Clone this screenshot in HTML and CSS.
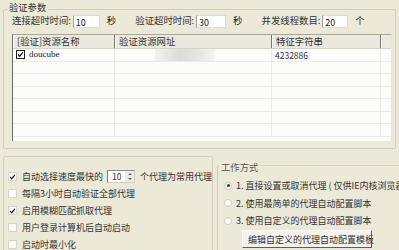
FILE: index.html
```html
<!DOCTYPE html>
<html>
<head>
<meta charset="utf-8">
<link rel="stylesheet" href="styles.css">
</head>
<body>
<div class="page">
  <div class="group top-group">
    <span class="legend">验证参数</span>
    <div class="param-row">
      <span class="lbl">连接超时时间:</span>
      <span class="input w27">10</span>
      <span class="unit">秒</span>
      <span class="lbl">验证超时时间:</span>
      <span class="input w30">30</span>
      <span class="unit">秒</span>
      <span class="lbl">并发线程数目:</span>
      <span class="input w26">20</span>
      <span class="unit">个</span>
    </div>
    <div class="list">
      <div class="list-head">
        <div class="hc c1">[验证]资源名称</div>
        <div class="hc c2">验证资源网址</div>
        <div class="hc c3">特征字符串</div>
        <div class="hc c4"></div>
      </div>
      <div class="list-body">
        <div class="lrow">
          <div class="cell c1"><span class="lcheck"><svg width="9" height="9" viewBox="0 0 9 9"><path d="M1.5 4.5 L3.5 6.8 L7.5 1.8" fill="none" stroke="#111" stroke-width="1.6"/></svg></span><span class="mono">doucube</span></div>
          <div class="cell c2"><span class="blur"></span></div>
          <div class="cell c3">4232886</div>
          <div class="cell c4"></div>
        </div>
        <div class="lrow"><div class="cell c1"></div><div class="cell c2"></div><div class="cell c3"></div><div class="cell c4"></div></div>
        <div class="lrow"><div class="cell c1"></div><div class="cell c2"></div><div class="cell c3"></div><div class="cell c4"></div></div>
        <div class="lrow"><div class="cell c1"></div><div class="cell c2"></div><div class="cell c3"></div><div class="cell c4"></div></div>
        <div class="lrow"><div class="cell c1"></div><div class="cell c2"></div><div class="cell c3"></div><div class="cell c4"></div></div>
        <div class="lrow"><div class="cell c1"></div><div class="cell c2"></div><div class="cell c3"></div><div class="cell c4"></div></div>
        <div class="lrow"><div class="cell c1"></div><div class="cell c2"></div><div class="cell c3"></div><div class="cell c4"></div></div>
      </div>
    </div>
  </div>
  <div class="bottom">
    <div class="group left-group">
      <div class="opt"><span class="cb"><svg width="9" height="9" viewBox="0 0 9 9"><path d="M1.5 4.5 L3.5 6.8 L7.5 1.8" fill="none" stroke="#111" stroke-width="1.5"/></svg></span><span>自动选择速度最快的</span><span class="spin"><span class="spin-val">10</span><span class="spin-btn"><span class="up"></span><span class="dn"></span></span></span><span>个代理为常用代理</span></div>
      <div class="opt"><span class="cb"></span><span>每隔3小时自动验证全部代理</span></div>
      <div class="opt"><span class="cb"><svg width="9" height="9" viewBox="0 0 9 9"><path d="M1.5 4.5 L3.5 6.8 L7.5 1.8" fill="none" stroke="#111" stroke-width="1.5"/></svg></span><span>启用模糊匹配抓取代理</span></div>
      <div class="opt"><span class="cb"></span><span>用户登录计算机后自动启动</span></div>
      <div class="opt"><span class="cb"></span><span>启动时最小化</span></div>
    </div>
    <div class="group right-group">
      <span class="legend legend-faded">工作方式</span>
      <div class="ropt"><span class="radio on"></span><span>1. 直接设置或取消代理 ( 仅供IE内核浏览器</span></div>
      <div class="ropt"><span class="radio"></span><span>2. 使用最简单的代理自动配置脚本</span></div>
      <div class="ropt"><span class="radio"></span><span>3. 使用自定义的代理自动配置脚本</span></div>
      <div class="btn-row"><span class="btn">编辑自定义的代理自动配置模板</span></div>
    </div>
  </div>
</div>
</body>
</html>
```
FILE: styles.css
```css
html, body {
  margin: 0;
  padding: 0;
}
body {
  width: 399px;
  height: 250px;
  overflow: hidden;
  background: #ece9d8;
  font-family: "Noto Sans CJK SC", "Noto Sans", sans-serif;
  font-size: 9px;
  color: #222;
  line-height: 1;
}
.page {
  padding: 9px 3px 0 3px;
  display: flex;
  flex-direction: column;
}
.group {
  position: relative;
  border: 1px solid #d3d0c2;
  border-radius: 2px;
}
.legend {
  position: absolute;
  top: -8px;
  left: 3px;
  padding: 0 2px;
  background: #ece9d8;
  font-size: 9.3px;
  color: #333;
  line-height: 10px;
  white-space: nowrap;
}
.legend-faded {
  color: #555;
  top: -4px;
  left: 1px;
}
.top-group {
  height: 140px;
  box-sizing: border-box;
  padding: 4px 3px 0 8px;
}
.param-row {
  display: flex;
  align-items: center;
  height: 14px;
  white-space: nowrap;
}
.param-row > span {
  flex-shrink: 0;
}
.lbl {
  font-size: 9.4px;
  color: #333;
  margin-right: 2px;
}
.input {
  background: #fff;
  height: 13px;
  box-sizing: border-box;
  border: 1px solid #d8dcdf;
  border-left-color: #9aa3ab;
  padding: 2px 0 0 2px;
  font-size: 9px;
  color: #222;
}
.w27 { width: 27px; }
.w30 { width: 30px; }
.w26 { width: 26px; }
.unit {
  margin: 0 19px 0 7px;
  font-size: 9.4px;
}
.list {
  margin-top: 6px;
  width: 380px;
  height: 107px;
  background: #fcfcfa;
  border-left: 1px solid #6d6c66;
  border-top: 1px solid #a9a79c;
  border-right: 1px solid #e8e6dc;
  box-sizing: border-box;
  display: flex;
  flex-direction: column;
}
.list-head {
  display: flex;
  height: 13px;
  background: #ebe9de;
  border-bottom: 1px solid #d6d3c7;
}
.hc {
  box-sizing: border-box;
  padding: 2px 0 0 3px;
  font-size: 9.4px;
  color: #333;
  border-right: 1px solid #777670;
  border-left: 1px solid #fff;
  white-space: nowrap;
}
.c1 { width: 102px; }
.c2 { width: 157px; }
.c3 { width: 109px; }
.c4 { flex: 1; border-right: none; }
.list-body {
  display: flex;
  flex-direction: column;
}
.lrow {
  display: flex;
  height: 12.5px;
  border-bottom: 1px solid #ecebe4;
  box-sizing: border-box;
}
.cell {
  box-sizing: border-box;
  border-right: 1px solid #ecebe4;
  display: flex;
  align-items: center;
  padding-left: 3px;
  font-size: 8.5px;
  color: #333;
  position: relative;
}
.cell.c4 { border-right: none; }
.lcheck {
  width: 9px;
  height: 9px;
  border: 1px solid #1f1f1f;
  box-sizing: border-box;
  display: inline-flex;
  align-items: center;
  justify-content: center;
  margin-right: 4px;
  background: #fff;
}
.lcheck svg { width: 7px; height: 7px; }
.mono {
  font-family: "Liberation Serif", serif;
  font-size: 9px;
  color: #222;
}
.blur {
  position: absolute;
  left: 40px;
  top: 0;
  width: 60px;
  height: 12px;
  background: linear-gradient(90deg, #f3f3f1, #dcdcda 40%, #e4e4e2 70%, #f5f5f3);
}
.bottom {
  display: flex;
  margin-top: 7px;
  gap: 4px;
}
.left-group {
  width: 211px;
  height: 100px;
  box-sizing: border-box;
  padding: 11px 0 0 4px;
  border-bottom: none;
  border-radius: 2px 2px 0 0;
}
.opt {
  display: flex;
  align-items: center;
  height: 17px;
  font-size: 9px;
  color: #333;
  white-space: nowrap;
}
.cb {
  width: 9px;
  height: 9px;
  background: #fbfbf8;
  border: 1px solid #d4d4cc;
  box-sizing: border-box;
  display: inline-flex;
  align-items: center;
  justify-content: center;
  margin-right: 5px;
}
.cb svg { width: 8px; height: 8px; }
.spin {
  display: inline-flex;
  align-items: center;
  margin: 0 5px 0 4px;
  height: 13px;
  width: 28px;
  background: #fff;
  border: 1px solid #d0d0c8;
  border-left-color: #7a7a74;
  border-top-color: #8a8a84;
  box-sizing: border-box;
}
.spin-val {
  flex: 1;
  padding-left: 4px;
  font-size: 8.5px;
}
.spin-btn {
  width: 9px;
  height: 11px;
  display: flex;
  flex-direction: column;
  justify-content: space-around;
  align-items: center;
  background: #ecebe4;
}
.up, .dn {
  width: 0;
  height: 0;
  border-left: 2px solid transparent;
  border-right: 2px solid transparent;
}
.up { border-bottom: 2px solid #666; }
.dn { border-top: 2px solid #666; }
.right-group {
  flex: 1;
  height: 92px;
  margin-top: 9px;
  box-sizing: border-box;
  padding: 11px 0 0 6px;
  border-right: none;
  border-bottom: none;
}
.ropt {
  display: flex;
  align-items: center;
  height: 17.5px;
  white-space: nowrap;
  font-size: 9px;
  color: #333;
}
.radio {
  width: 8px;
  height: 8px;
  border-radius: 50%;
  background: #fff;
  border: 1px solid #c9c9c2;
  box-sizing: border-box;
  margin-right: 4px;
  display: inline-flex;
  align-items: center;
  justify-content: center;
  flex-shrink: 0;
}
.radio.on::after {
  content: "";
  width: 3px;
  height: 3px;
  border-radius: 50%;
  background: #333;
}
.btn-row {
  display: flex;
  padding-left: 18px;
  margin-top: 0;
}
.btn {
  width: 130px;
  height: 18px;
  box-sizing: border-box;
  padding: 4px 0 0 5px;
  font-size: 9px;
  color: #333;
  background: #f3f2ec;
  border: 1px solid #fff;
  border-right-color: #5f5e58;
  border-bottom-color: #5f5e58;
  white-space: nowrap;
}
```
